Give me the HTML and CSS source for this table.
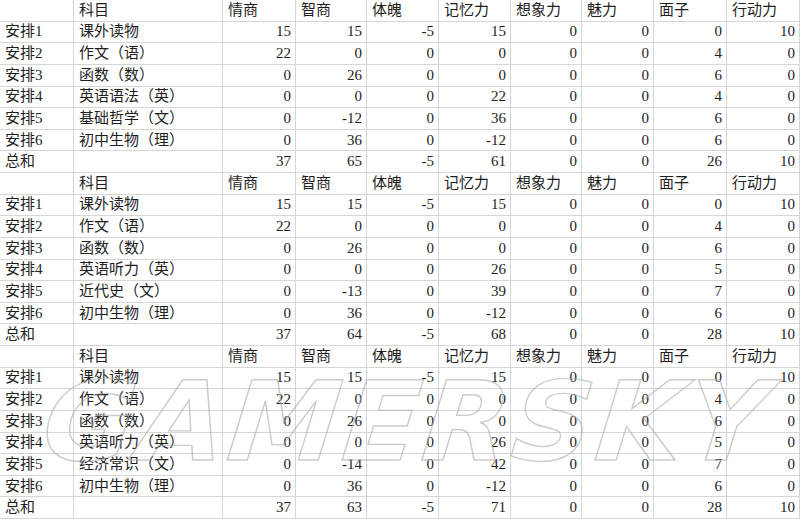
FILE: index.html
```html
<!DOCTYPE html>
<html lang="zh">
<head>
<meta charset="utf-8">
<link rel="stylesheet" href="styles.css">
</head>
<body>
<div class="page">
<div class="sheet">
<div class="c"></div><div class="c">科目</div><div class="c">情商</div><div class="c">智商</div><div class="c">体魄</div><div class="c">记忆力</div><div class="c">想象力</div><div class="c">魅力</div><div class="c">面子</div><div class="c">行动力</div>
<div class="c">安排1</div><div class="c">课外读物</div><div class="c n">15</div><div class="c n">15</div><div class="c n">-5</div><div class="c n">15</div><div class="c n">0</div><div class="c n">0</div><div class="c n">0</div><div class="c n">10</div>
<div class="c">安排2</div><div class="c">作文（语）</div><div class="c n">22</div><div class="c n">0</div><div class="c n">0</div><div class="c n">0</div><div class="c n">0</div><div class="c n">0</div><div class="c n">4</div><div class="c n">0</div>
<div class="c">安排3</div><div class="c">函数（数）</div><div class="c n">0</div><div class="c n">26</div><div class="c n">0</div><div class="c n">0</div><div class="c n">0</div><div class="c n">0</div><div class="c n">6</div><div class="c n">0</div>
<div class="c">安排4</div><div class="c">英语语法（英）</div><div class="c n">0</div><div class="c n">0</div><div class="c n">0</div><div class="c n">22</div><div class="c n">0</div><div class="c n">0</div><div class="c n">4</div><div class="c n">0</div>
<div class="c">安排5</div><div class="c">基础哲学（文）</div><div class="c n">0</div><div class="c n">-12</div><div class="c n">0</div><div class="c n">36</div><div class="c n">0</div><div class="c n">0</div><div class="c n">6</div><div class="c n">0</div>
<div class="c">安排6</div><div class="c">初中生物（理）</div><div class="c n">0</div><div class="c n">36</div><div class="c n">0</div><div class="c n">-12</div><div class="c n">0</div><div class="c n">0</div><div class="c n">6</div><div class="c n">0</div>
<div class="c">总和</div><div class="c"></div><div class="c n">37</div><div class="c n">65</div><div class="c n">-5</div><div class="c n">61</div><div class="c n">0</div><div class="c n">0</div><div class="c n">26</div><div class="c n">10</div>

<div class="c"></div><div class="c">科目</div><div class="c">情商</div><div class="c">智商</div><div class="c">体魄</div><div class="c">记忆力</div><div class="c">想象力</div><div class="c">魅力</div><div class="c">面子</div><div class="c">行动力</div>
<div class="c">安排1</div><div class="c">课外读物</div><div class="c n">15</div><div class="c n">15</div><div class="c n">-5</div><div class="c n">15</div><div class="c n">0</div><div class="c n">0</div><div class="c n">0</div><div class="c n">10</div>
<div class="c">安排2</div><div class="c">作文（语）</div><div class="c n">22</div><div class="c n">0</div><div class="c n">0</div><div class="c n">0</div><div class="c n">0</div><div class="c n">0</div><div class="c n">4</div><div class="c n">0</div>
<div class="c">安排3</div><div class="c">函数（数）</div><div class="c n">0</div><div class="c n">26</div><div class="c n">0</div><div class="c n">0</div><div class="c n">0</div><div class="c n">0</div><div class="c n">6</div><div class="c n">0</div>
<div class="c">安排4</div><div class="c">英语听力（英）</div><div class="c n">0</div><div class="c n">0</div><div class="c n">0</div><div class="c n">26</div><div class="c n">0</div><div class="c n">0</div><div class="c n">5</div><div class="c n">0</div>
<div class="c">安排5</div><div class="c">近代史（文）</div><div class="c n">0</div><div class="c n">-13</div><div class="c n">0</div><div class="c n">39</div><div class="c n">0</div><div class="c n">0</div><div class="c n">7</div><div class="c n">0</div>
<div class="c">安排6</div><div class="c">初中生物（理）</div><div class="c n">0</div><div class="c n">36</div><div class="c n">0</div><div class="c n">-12</div><div class="c n">0</div><div class="c n">0</div><div class="c n">6</div><div class="c n">0</div>
<div class="c">总和</div><div class="c"></div><div class="c n">37</div><div class="c n">64</div><div class="c n">-5</div><div class="c n">68</div><div class="c n">0</div><div class="c n">0</div><div class="c n">28</div><div class="c n">10</div>

<div class="c"></div><div class="c">科目</div><div class="c">情商</div><div class="c">智商</div><div class="c">体魄</div><div class="c">记忆力</div><div class="c">想象力</div><div class="c">魅力</div><div class="c">面子</div><div class="c">行动力</div>
<div class="c">安排1</div><div class="c">课外读物</div><div class="c n">15</div><div class="c n">15</div><div class="c n">-5</div><div class="c n">15</div><div class="c n">0</div><div class="c n">0</div><div class="c n">0</div><div class="c n">10</div>
<div class="c">安排2</div><div class="c">作文（语）</div><div class="c n">22</div><div class="c n">0</div><div class="c n">0</div><div class="c n">0</div><div class="c n">0</div><div class="c n">0</div><div class="c n">4</div><div class="c n">0</div>
<div class="c">安排3</div><div class="c">函数（数）</div><div class="c n">0</div><div class="c n">26</div><div class="c n">0</div><div class="c n">0</div><div class="c n">0</div><div class="c n">0</div><div class="c n">6</div><div class="c n">0</div>
<div class="c">安排4</div><div class="c">英语听力（英）</div><div class="c n">0</div><div class="c n">0</div><div class="c n">0</div><div class="c n">26</div><div class="c n">0</div><div class="c n">0</div><div class="c n">5</div><div class="c n">0</div>
<div class="c">安排5</div><div class="c">经济常识（文）</div><div class="c n">0</div><div class="c n">-14</div><div class="c n">0</div><div class="c n">42</div><div class="c n">0</div><div class="c n">0</div><div class="c n">7</div><div class="c n">0</div>
<div class="c">安排6</div><div class="c">初中生物（理）</div><div class="c n">0</div><div class="c n">36</div><div class="c n">0</div><div class="c n">-12</div><div class="c n">0</div><div class="c n">0</div><div class="c n">6</div><div class="c n">0</div>
<div class="c">总和</div><div class="c"></div><div class="c n">37</div><div class="c n">63</div><div class="c n">-5</div><div class="c n">71</div><div class="c n">0</div><div class="c n">0</div><div class="c n">28</div><div class="c n">10</div>
</div>
<div class="watermark">GAMERSKY</div>
</div>
</body>
</html>
```
FILE: styles.css
```css
html, body {
  margin: 0;
  padding: 0;
  background: #ffffff;
}
.page {
  position: relative;
  width: 800px;
  height: 519px;
  overflow: hidden;
}
.sheet {
  display: grid;
  grid-template-columns: 74px 149px 73px 71px 72px 72px 71px 72px 73px 73px;
  grid-template-rows: repeat(24, 21.625px);
  font-family: "Liberation Serif", "Noto Sans CJK SC", serif;
  font-size: 15px;
  color: #1e1e1e;
}
.c {
  box-sizing: border-box;
  border-right: 1px solid #d6d6d6;
  border-bottom: 1px solid #d6d6d6;
  padding: 0 4px 0 5px;
  display: flex;
  align-items: center;
  white-space: nowrap;
  overflow: hidden;
  line-height: 1;
}
.n {
  justify-content: flex-end;
  padding-right: 4px;
}
.watermark {
  position: absolute;
  left: 50px;
  top: 367px;
  font-family: "DejaVu Sans", sans-serif;
  font-weight: bold;
  font-style: italic;
  font-size: 110px;
  letter-spacing: 3px;
  line-height: 1;
  color: transparent;
  -webkit-text-stroke: 1.4px rgba(170, 170, 170, 0.6);
  transform: scaleX(1.02) skewX(-6deg);
  transform-origin: left top;
  pointer-events: none;
}
```
